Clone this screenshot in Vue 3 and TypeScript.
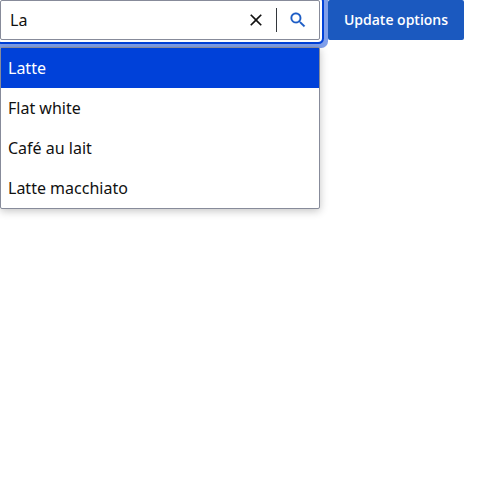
<script setup lang="ts">
import { ref } from 'vue'

const query = ref('La')
const selected = ref(0)
const options: string[] = ['Latte', 'Flat white', 'Café au lait', 'Latte macchiato']
</script>

<template>
  <main class="row">
    <div class="search">
      <div class="field">
        <input v-model="query" class="input" type="text" aria-label="Search" />
        <button class="icon clear" type="button" aria-label="Clear" @click="query = ''">
          <svg width="20" height="20" viewBox="0 0 24 24"><path d="M19 6.41 17.59 5 12 10.59 6.41 5 5 6.41 10.59 12 5 17.59 6.41 19 12 13.41 17.59 19 19 17.59 13.41 12z" /></svg>
        </button>
        <span class="divider"></span>
        <button class="icon find" type="button" aria-label="Search">
          <svg width="20" height="20" viewBox="0 0 24 24"><path d="M15.5 14h-.79l-.28-.27A6.47 6.47 0 0 0 16 9.5 6.5 6.5 0 1 0 9.5 16c1.61 0 3.09-.59 4.23-1.57l.27.28v.79l5 4.99L20.49 19zm-6 0C7.01 14 5 11.99 5 9.5S7.01 5 9.5 5 14 7.01 14 9.5 11.99 14 9.5 14" /></svg>
        </button>
      </div>
      <ul class="menu">
        <li v-for="(o, i) in options" :key="o" class="option" :class="{ active: i === selected }" @mouseenter="selected = i">{{ o }}</li>
      </ul>
    </div>
    <button class="update" type="button">Update options</button>
  </main>
</template>

<style>
body { background: #fff; }
</style>

<style scoped>
.row { display: flex; align-items: flex-start; gap: 8px; min-height: 100vh; font-family: "Noto Sans", sans-serif; }
.search { position: relative; width: 320px; }
.field {
  box-sizing: border-box; display: flex; align-items: center; width: 320px; height: 40px;
  border: 1px solid #878b9a; border-radius: 2px; background: #fff;
  box-shadow: 0 0 0 2px #fff, 0 0 0 4px #0041d9, 0 0 0 8px #809fea;
}
.input { flex: 1; min-width: 0; height: 38px; box-sizing: border-box; border: 0; padding: 0 9px; outline: 0; background: none; color: #111; font: 16px/24px "Noto Sans", sans-serif; }
.icon { display: flex; align-items: center; justify-content: center; height: 38px; padding: 0; border: 0; background: none; }
.clear { width: 40px; color: #111; }
.find { width: 42px; color: #1b5bc5; }
.find svg { stroke: currentColor; stroke-width: .25; }
.icon svg { fill: currentColor; }
.divider { width: 1px; height: 24px; background: #33373d; }
.menu {
  position: absolute; top: 47px; left: 0; box-sizing: border-box; width: 320px; margin: 0; padding: 0; list-style: none;
  border: 1px solid #878b9a; border-radius: 2px; background: #fff; box-shadow: 0 2px 8px rgba(0, 0, 0, .24);
}
.option { height: 40px; box-sizing: border-box; padding: 8px 7px; font-size: 16px; line-height: 24px; color: #111; }
.option.active { background: #0041d9; color: #fff; }
.update { width: 136px; height: 40px; padding: 0; border: 0; border-radius: 2px; background: #1b59bf; color: #fff; font: 600 14px/20px "Open Sans", "Noto Sans", sans-serif; }
</style>
